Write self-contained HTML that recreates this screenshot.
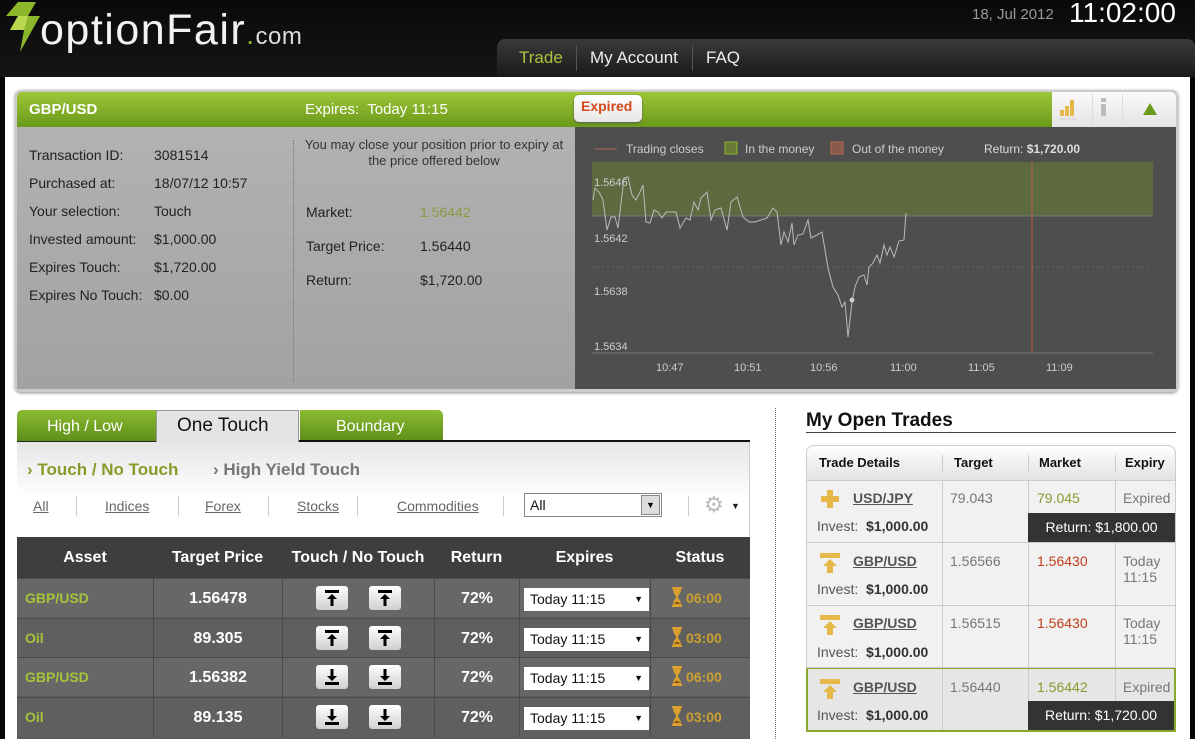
<!DOCTYPE html>
<html><head><meta charset="utf-8"><style>
*{margin:0;padding:0;box-sizing:border-box}
body{width:1195px;height:739px;background:#050505;font-family:"Liberation Sans",sans-serif;position:relative;overflow:hidden}
.a{position:absolute}
.t{position:absolute;white-space:nowrap}
.lbl{font-size:14px;color:#222}
table{border-collapse:collapse}
</style></head><body>
<!-- header -->
<div class="a" style="left:0;top:0;width:1195px;height:77px;background:linear-gradient(#0a0a0a,#151515)"></div>
<svg class="a" style="left:6px;top:2px" width="36" height="50" viewBox="0 0 36 50"><path d="M12 0 L30 0 L22 14 L34 14 L14 50 L18 28 L4 28 L12 14 L0 14 Z" fill="#8ab82a"/><path d="M12 14 L22 14 L18 28 L4 28Z" fill="#b9d84e"/></svg>
<div class="t" style="left:40px;top:6px;font-size:43px;color:#f2f2f2;letter-spacing:1.5px">optionFair<span style="color:#8ab82a;font-size:28px">.</span><span style="font-size:24px;color:#ddd;letter-spacing:0.5px">com</span></div>
<div class="t" style="left:972px;top:6px;font-size:15px;color:#999">18, Jul 2012</div>
<div class="t" style="left:1069px;top:-3px;font-size:28px;color:#fff">11:02:00</div>
<div class="a" style="left:497px;top:39px;width:698px;height:38px;background:linear-gradient(#3a3a3a,#1a1a1a);border-radius:8px 8px 0 0"></div>
<div class="t" style="left:519px;top:48px;font-size:17px;color:#a8c43a">Trade</div>
<div class="a" style="left:576px;top:45px;width:1px;height:26px;background:#555"></div>
<div class="t" style="left:590px;top:48px;font-size:17px;color:#eee">My Account</div>
<div class="a" style="left:692px;top:45px;width:1px;height:26px;background:#555"></div>
<div class="t" style="left:706px;top:48px;font-size:17px;color:#eee">FAQ</div>
<div class="a" style="left:5px;top:77px;width:1185px;height:662px;background:#fff"></div>

<!-- top panel -->
<div class="a" style="left:15px;top:90px;width:1163px;height:302px;border-radius:6px;background:#ccc;box-shadow:0 1px 3px #888"></div>
<div class="a" style="left:17px;top:92px;width:1036px;height:35px;background:linear-gradient(#9ec63a,#6a9a1a);border-radius:5px 0 0 0"></div>
<div class="a" style="left:1052px;top:92px;width:124px;height:35px;background:linear-gradient(#fafafa,#e4e4e4);border-radius:0 5px 0 0"></div>
<div class="a" style="left:1092px;top:94px;width:1px;height:31px;background:#ddd"></div><div class="a" style="left:1122px;top:94px;width:1px;height:31px;background:#ddd"></div>
<svg class="a" style="left:1058px;top:96px" width="22" height="26"><rect x="2" y="14" width="4" height="6" fill="#e6b84a"/><rect x="7" y="10" width="4" height="10" fill="#e6b84a"/><rect x="12" y="4" width="4" height="16" fill="#e6b84a"/><rect x="1" y="22" width="18" height="2" fill="#ddd"/></svg>
<svg class="a" style="left:1098px;top:97px" width="12" height="24"><rect x="3" y="1" width="5" height="4" fill="#bbb"/><rect x="3" y="7" width="5" height="12" fill="#bbb"/></svg>
<svg class="a" style="left:1143px;top:103px" width="14" height="12"><path d="M7 0 L14 12 L0 12Z" fill="#6a9a1a"/></svg>
<div class="t" style="left:29px;top:101px;font-size:15px;font-weight:bold;color:#fff">GBP/USD</div>
<div class="t" style="left:305px;top:101px;font-size:15px;color:#fff">Expires:&nbsp; Today 11:15</div>
<div class="a" style="left:574px;top:95px;width:68px;height:27px;background:linear-gradient(#fff,#e6e6e6);border-radius:5px;box-shadow:0 1px 2px #555"></div>
<div class="t" style="left:581px;top:98px;font-size:14px;font-weight:bold;color:#d4481b">Expired</div>

<div class="a" style="left:17px;top:127px;width:558px;height:262px;background:linear-gradient(#b2b2b2,#a2a2a2)"></div>
<div class="a" style="left:293px;top:140px;width:0;height:242px;border-left:1px dotted #777"></div>
<div class="t lbl" style="left:29px;top:147px">Transaction ID:</div><div class="t lbl" style="left:154px;top:147px">3081514</div>
<div class="t lbl" style="left:29px;top:175px">Purchased at:</div><div class="t lbl" style="left:154px;top:175px">18/07/12 10:57</div>
<div class="t lbl" style="left:29px;top:203px">Your selection:</div><div class="t lbl" style="left:154px;top:203px">Touch</div>
<div class="t lbl" style="left:29px;top:231px">Invested amount:</div><div class="t lbl" style="left:154px;top:231px">$1,000.00</div>
<div class="t lbl" style="left:29px;top:259px">Expires Touch:</div><div class="t lbl" style="left:154px;top:259px">$1,720.00</div>
<div class="t lbl" style="left:29px;top:287px">Expires No Touch:</div><div class="t lbl" style="left:154px;top:287px">$0.00</div>
<div class="a" style="left:298px;top:137px;width:272px;font-size:13px;color:#333;text-align:center;line-height:16px">You may close your position prior to expiry at the price offered below</div>
<div class="t lbl" style="left:306px;top:204px">Market:</div><div class="t lbl" style="left:420px;top:204px;color:#8a9a40">1.56442</div>
<div class="t lbl" style="left:306px;top:238px">Target Price:</div><div class="t lbl" style="left:420px;top:238px">1.56440</div>
<div class="t lbl" style="left:306px;top:272px">Return:</div><div class="t lbl" style="left:420px;top:272px">$1,720.00</div>

<!-- chart -->
<div class="a" style="left:575px;top:127px;width:601px;height:262px;background:#4e4e4e"></div>
<svg class="a" style="left:575px;top:127px" width="601" height="262" font-family="Liberation Sans" font-size="11">
<line x1="20" y1="22" x2="42" y2="22" stroke="#b06a50"/>
<text x="51" y="26" fill="#ccc" font-size="12">Trading closes</text>
<rect x="150" y="15" width="12" height="12" fill="#6a7a3a" stroke="#8ab82a"/>
<text x="170" y="26" fill="#ccc" font-size="12">In the money</text>
<rect x="256" y="15" width="12" height="12" fill="#8a5a4a" stroke="#b06a50"/>
<text x="277" y="26" fill="#ccc" font-size="12">Out of the money</text>
<text x="409" y="26" fill="#ddd" font-size="12">Return: <tspan font-weight="bold">$1,720.00</tspan></text>
<rect x="17" y="35" width="561" height="54" fill="#5d6a40"/>
<line x1="17" y1="89" x2="578" y2="89" stroke="#777"/>
<line x1="17" y1="140" x2="578" y2="140" stroke="#666" stroke-dasharray="2,3"/>
<line x1="17" y1="226" x2="578" y2="226" stroke="#777"/>
<line x1="457" y1="35" x2="457" y2="226" stroke="#c06040"/>
<text x="19" y="59" fill="#ccc">1.5646</text><text x="19" y="115" fill="#ccc">1.5642</text><text x="19" y="168" fill="#ccc">1.5638</text><text x="19" y="223" fill="#ccc">1.5634</text>
<g fill="#ccc"><text x="81" y="244">10:47</text><text x="159" y="244">10:51</text><text x="235" y="244">10:56</text><text x="315" y="244">11:00</text><text x="393" y="244">11:05</text><text x="471" y="244">11:09</text></g>
<polyline fill="none" stroke="#bbb" stroke-width="1" points="18,73 20,61 24,65 28,73 32,103 36,90 40,90 43,101 47,68 49,51 53,50 57,68 61,73 65,65 68,58 71,95 75,96 79,83 83,85 87,91 91,85 101,85 105,101 111,91 115,93 119,75 123,83 126,71 132,65 136,93 140,83 146,81 152,103 156,75 162,70 168,90 174,95 180,95 186,93 192,91 198,81 202,85 206,118 209,105 213,115 217,96 219,118 223,108 228,107 233,93 236,111 242,108 247,105 253,141 258,160 263,168 267,180 270,175 273,210 277,175 280,160 284,150 289,148 292,158 294,140 298,136 302,128 305,136 309,118 312,128 315,120 319,130 324,114 329,113 331,86"/>
<circle cx="277" cy="173" r="2.5" fill="#ccc"/>
</svg>

<!-- tabs -->
<div class="a" style="left:17px;top:410px;width:139px;height:31px;background:linear-gradient(#8cbc32,#5e8e18);border-radius:5px 0 0 0"></div>
<div class="t" style="left:47px;top:418px;font-size:16px;color:#fff">High / Low</div>
<div class="a" style="left:156px;top:410px;width:143px;height:32px;background:#e4e4e4;border:1px solid #999;border-bottom:none"></div>
<div class="t" style="left:177px;top:415px;font-size:19px;color:#111">One Touch</div>
<div class="a" style="left:300px;top:410px;width:143px;height:31px;background:linear-gradient(#8cbc32,#5e8e18);border-radius:0 5px 0 0"></div>
<div class="t" style="left:336px;top:418px;font-size:16px;color:#fff">Boundary</div>
<div class="a" style="left:17px;top:441px;width:139px;height:1px;background:#222"></div>
<div class="a" style="left:299px;top:440px;width:451px;height:2px;background:#111"></div>
<div class="a" style="left:17px;top:442px;width:733px;height:94px;background:linear-gradient(#e6e6e6,#fff 60%,#fff);border-right:1px solid #ccc"></div>
<div class="t" style="left:27px;top:460px;font-size:17px;font-weight:bold;color:#8a9a2a">› Touch / No Touch</div>
<div class="t" style="left:213px;top:460px;font-size:17px;font-weight:bold;color:#777">› High Yield Touch</div>
<div class="t" style="left:33px;top:498px;font-size:14px;color:#666;text-decoration:underline">All</div>
<div class="t" style="left:105px;top:498px;font-size:14px;color:#666;text-decoration:underline">Indices</div>
<div class="t" style="left:205px;top:498px;font-size:14px;color:#666;text-decoration:underline">Forex</div>
<div class="t" style="left:297px;top:498px;font-size:14px;color:#666;text-decoration:underline">Stocks</div>
<div class="t" style="left:397px;top:498px;font-size:14px;color:#666;text-decoration:underline">Commodities</div>
<div class="a" style="left:76px;top:496px;width:1px;height:20px;background:#ccc"></div><div class="a" style="left:178px;top:496px;width:1px;height:20px;background:#ccc"></div><div class="a" style="left:268px;top:496px;width:1px;height:20px;background:#ccc"></div><div class="a" style="left:357px;top:496px;width:1px;height:20px;background:#ccc"></div><div class="a" style="left:503px;top:496px;width:1px;height:20px;background:#ccc"></div><div class="a" style="left:688px;top:496px;width:1px;height:20px;background:#ccc"></div>
<div class="a" style="left:524px;top:493px;width:138px;height:24px;border:1px solid #888;background:#fff"></div>
<div class="t" style="left:530px;top:497px;font-size:14px;color:#111">All</div>
<div class="a" style="left:641px;top:495px;width:19px;height:20px;background:#ddd;border:1px solid #888;font-size:9px;text-align:center;line-height:18px">▼</div>
<div class="t" style="left:704px;top:492px;font-size:22px;color:#bbb">⚙</div><div class="t" style="left:731px;top:501px;font-size:9px;color:#222">▼</div>

<!-- table -->
<div class="a" style="left:17px;top:537px;width:733px;height:202px;background:#5e5e5e"></div>
<table class="a" style="left:17px;top:537px;width:733px;font-weight:bold;color:#fff;text-align:center">
<tr style="height:41px;background:#3e3e3e;font-size:16px"><td style="width:136px">Asset</td><td style="width:129px">Target Price</td><td style="width:152px">Touch / No Touch</td><td style="width:85px">Return</td><td style="width:131px">Expires</td><td>Status</td></tr>
</table>
<style>
.row{position:absolute;left:17px;width:733px;height:39px;border-top:1px solid #4a4a4a}
.row>div{position:absolute;top:0;height:39px;line-height:39px;color:#fff;font-weight:bold}
.cb{border-left:1px solid #4a4a4a}
.btn{position:absolute;top:7px!important;width:32px;height:24px!important;background:linear-gradient(#fff,#cfcfcf);border-radius:3px;line-height:0!important}
.btn svg{margin:3px 7px}
.sel{position:absolute;top:9px!important;left:507px;width:125px;height:23px!important;background:#fff;line-height:23px!important;color:#111!important;font-weight:normal!important;font-size:14px;padding-left:6px}
.sel span{position:absolute;right:6px;font-size:9px}
.st{color:#c9a030!important;font-size:14px;padding-left:20px}
.st svg{vertical-align:-4px;margin-right:3px}
</style>
<svg width="0" height="0" style="position:absolute"><defs>
<g id="up"><rect x="2" y="1" width="14" height="3" fill="#000"/><path d="M9 5 L4 10 H7.5 V17 H10.5 V10 H14Z" fill="#000"/></g>
<g id="dn"><path d="M9 13 L4 8 H7.5 V1 H10.5 V8 H14Z" fill="#000"/><rect x="2" y="14" width="14" height="3" fill="#000"/></g>
<g id="hg"><path d="M1 0 H11 V2 H10 C10 7 7 8 7 10 C7 12 10 13 10 18 H11 V20 H1 V18 H2 C2 13 5 12 5 10 C5 8 2 7 2 2 H1Z" fill="#d9a030"/><path d="M3 17 C4 14 8 14 9 17Z" fill="#8a5a10"/></g>
<g id="ga"><rect x="0" y="0" width="20" height="5" fill="#e6b84a"/><path d="M10 6 L3 13 H7 V20 H13 V13 H17Z" fill="#e6b84a"/></g>
</defs></svg>
<div class="row" style="top:578px;background:#676767"><div style="left:8px;color:#a5c43a;font-size:14px">GBP/USD</div><div class="cb" style="left:136px;width:129px;text-align:center;font-size:16px">1.56478</div><div class="cb" style="left:265px;width:152px"></div><div class="btn" style="left:299px"><svg width="18" height="18"><use href="#up"/></svg></div><div class="btn" style="left:352px"><svg width="18" height="18"><use href="#up"/></svg></div><div class="cb" style="left:417px;width:85px;text-align:center;font-size:16px">72%</div><div class="cb" style="left:502px;width:131px"></div><div class="sel">Today 11:15<span>▼</span></div><div class="cb st" style="left:633px;width:100px"><svg width="12" height="20"><use href="#hg"/></svg>06:00</div></div>
<div class="row" style="top:618px;background:#5f5f5f"><div style="left:8px;color:#a5c43a;font-size:14px">Oil</div><div class="cb" style="left:136px;width:129px;text-align:center;font-size:16px">89.305</div><div class="cb" style="left:265px;width:152px"></div><div class="btn" style="left:299px"><svg width="18" height="18"><use href="#up"/></svg></div><div class="btn" style="left:352px"><svg width="18" height="18"><use href="#up"/></svg></div><div class="cb" style="left:417px;width:85px;text-align:center;font-size:16px">72%</div><div class="cb" style="left:502px;width:131px"></div><div class="sel">Today 11:15<span>▼</span></div><div class="cb st" style="left:633px;width:100px"><svg width="12" height="20"><use href="#hg"/></svg>03:00</div></div>
<div class="row" style="top:657px;background:#676767"><div style="left:8px;color:#a5c43a;font-size:14px">GBP/USD</div><div class="cb" style="left:136px;width:129px;text-align:center;font-size:16px">1.56382</div><div class="cb" style="left:265px;width:152px"></div><div class="btn" style="left:299px"><svg width="18" height="18"><use href="#dn"/></svg></div><div class="btn" style="left:352px"><svg width="18" height="18"><use href="#dn"/></svg></div><div class="cb" style="left:417px;width:85px;text-align:center;font-size:16px">72%</div><div class="cb" style="left:502px;width:131px"></div><div class="sel">Today 11:15<span>▼</span></div><div class="cb st" style="left:633px;width:100px"><svg width="12" height="20"><use href="#hg"/></svg>06:00</div></div>
<div class="row" style="top:697px;background:#5f5f5f"><div style="left:8px;color:#a5c43a;font-size:14px">Oil</div><div class="cb" style="left:136px;width:129px;text-align:center;font-size:16px">89.135</div><div class="cb" style="left:265px;width:152px"></div><div class="btn" style="left:299px"><svg width="18" height="18"><use href="#dn"/></svg></div><div class="btn" style="left:352px"><svg width="18" height="18"><use href="#dn"/></svg></div><div class="cb" style="left:417px;width:85px;text-align:center;font-size:16px">72%</div><div class="cb" style="left:502px;width:131px"></div><div class="sel">Today 11:15<span>▼</span></div><div class="cb st" style="left:633px;width:100px"><svg width="12" height="20"><use href="#hg"/></svg>03:00</div></div>

<div class="a" style="left:775px;top:408px;height:331px;border-left:1px dotted #666"></div>

<!-- open trades -->
<div class="t" style="left:806px;top:410px;font-size:19px;font-weight:bold;color:#111">My Open Trades</div>
<div class="a" style="left:806px;top:432px;width:370px;height:1px;background:#444"></div>
<div class="a" style="left:806px;top:445px;width:370px;height:36px;background:linear-gradient(#fff,#e2e2e2);border:1px solid #ccc;border-radius:8px 8px 0 0"></div>
<div class="t" style="left:819px;top:455px;font-size:13px;font-weight:bold;color:#111">Trade Details</div>
<div class="t" style="left:954px;top:455px;font-size:13px;font-weight:bold;color:#111">Target</div>
<div class="t" style="left:1039px;top:455px;font-size:13px;font-weight:bold;color:#111">Market</div>
<div class="t" style="left:1125px;top:455px;font-size:13px;font-weight:bold;color:#111">Expiry</div>
<div class="a" style="left:942px;top:455px;width:1px;height:18px;background:#ccc"></div><div class="a" style="left:1028px;top:455px;width:1px;height:18px;background:#ccc"></div><div class="a" style="left:1115px;top:455px;width:1px;height:18px;background:#ccc"></div>
<style>
.tr{position:absolute;left:806px;width:370px;background:#f1f1f1;border:1px solid #ccc;border-top:none}
.tr .c{position:absolute;top:0;bottom:0;border-left:1px solid #ccc}
.tr .x{position:absolute;white-space:nowrap;font-size:14px}
.tr .ret{position:absolute;left:221px;right:0;bottom:0;height:29px;background:#333;color:#fff;font-size:14px;text-align:center;line-height:29px}
</style>
<div class="tr" style="top:481px;height:62px"><div class="c" style="left:135px"></div><div class="c" style="left:221px"></div><div class="c" style="left:308px;height:31px"></div>
<svg class="x" style="left:14px;top:9px" width="18" height="18"><path d="M6 0 H12 V6 H18 V12 H12 V18 H6 V12 H0 V6 H6Z" fill="#e6b84a"/></svg><div class="x" style="left:46px;top:9px;font-weight:bold;color:#555;text-decoration:underline">USD/JPY</div><div class="x" style="left:10px;top:37px;color:#555">Invest:&nbsp; <b style="color:#333">$1,000.00</b></div>
<div class="x" style="left:143px;top:9px;color:#777">79.043</div><div class="x" style="left:230px;top:9px;color:#8a9a30">79.045</div><div class="x" style="left:316px;top:9px;color:#777">Expired</div><div class="ret">Return: $1,800.00</div></div>
<div class="tr" style="top:543px;height:63px"><div class="c" style="left:135px"></div><div class="c" style="left:221px"></div><div class="c" style="left:308px"></div>
<svg class="x" style="left:13px;top:10px" width="20" height="20"><use href="#ga"/></svg><div class="x" style="left:46px;top:10px;font-weight:bold;color:#555;text-decoration:underline">GBP/USD</div><div class="x" style="left:10px;top:38px;color:#555">Invest:&nbsp; <b style="color:#333">$1,000.00</b></div>
<div class="x" style="left:143px;top:10px;color:#777">1.56566</div><div class="x" style="left:230px;top:10px;color:#c0401a">1.56430</div><div class="x" style="left:316px;top:10px;color:#777;line-height:16px">Today<br>11:15</div></div>
<div class="tr" style="top:606px;height:62px"><div class="c" style="left:135px"></div><div class="c" style="left:221px"></div><div class="c" style="left:308px"></div>
<svg class="x" style="left:13px;top:9px" width="20" height="20"><use href="#ga"/></svg><div class="x" style="left:46px;top:9px;font-weight:bold;color:#555;text-decoration:underline">GBP/USD</div><div class="x" style="left:10px;top:38px;color:#555">Invest:&nbsp; <b style="color:#333">$1,000.00</b></div>
<div class="x" style="left:143px;top:9px;color:#777">1.56515</div><div class="x" style="left:230px;top:9px;color:#c0401a">1.56430</div><div class="x" style="left:316px;top:9px;color:#777;line-height:16px">Today<br>11:15</div></div>
<div class="tr" style="top:668px;height:64px;background:#e6e6e6;border:2px solid #8aa830;border-top:1px solid #8aa830;left:806px"><div class="c" style="left:134px"></div><div class="c" style="left:220px"></div><div class="c" style="left:307px;height:32px"></div>
<svg class="x" style="left:12px;top:10px" width="20" height="20"><use href="#ga"/></svg><div class="x" style="left:45px;top:10px;font-weight:bold;color:#555;text-decoration:underline">GBP/USD</div><div class="x" style="left:9px;top:38px;color:#555">Invest:&nbsp; <b style="color:#333">$1,000.00</b></div>
<div class="x" style="left:142px;top:10px;color:#777">1.56440</div><div class="x" style="left:229px;top:10px;color:#8a9a30">1.56442</div><div class="x" style="left:315px;top:10px;color:#777">Expired</div><div class="ret" style="left:220px">Return: $1,720.00</div></div>
</body></html>
